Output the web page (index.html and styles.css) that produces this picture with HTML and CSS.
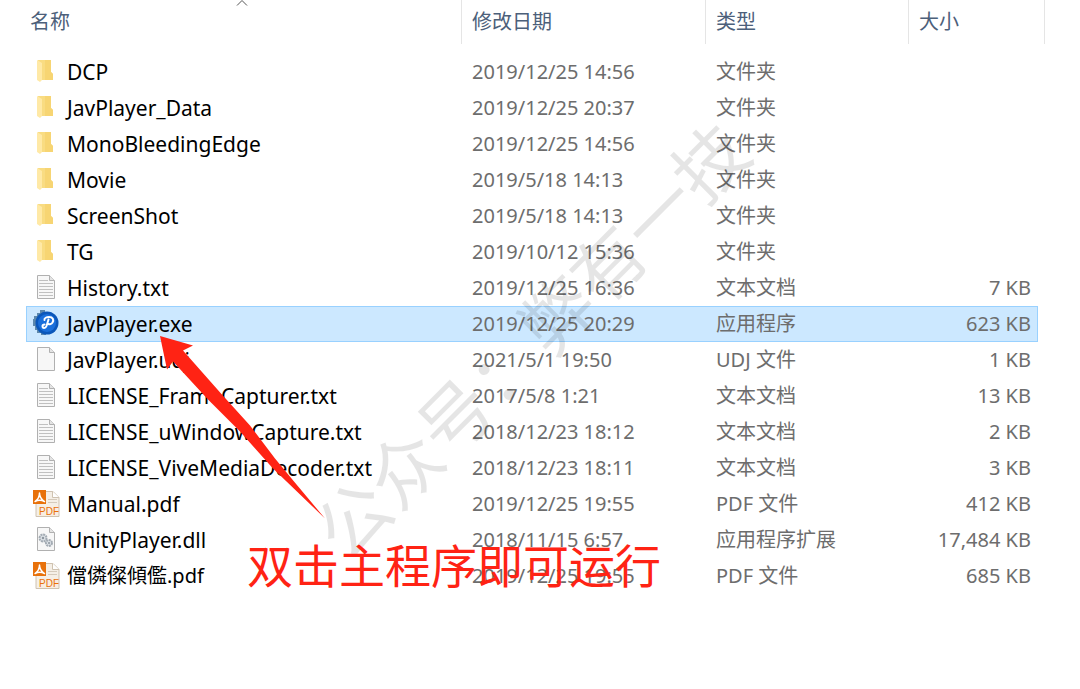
FILE: index.html
```html
<!DOCTYPE html>
<html lang="zh-CN">
<head>
    <meta charset="UTF-8">
    <meta name="viewport" content="width=device-width, initial-scale=1.0">
    <title>JavPlayer</title>
    <link rel="stylesheet" href="styles.css">
</head>
<body>
    <svg class="sprite" aria-hidden="true">
        <symbol id="folder" viewBox="0 0 28 28">
            <path d="M6 2h13v12l2 2v6H8z" fill="#f9dc82"/>
            <path d="M13 2h6v12l2 2v6h-8z" fill="#f7d573"/>
            <path d="M5 2l5 3v17l-2 2-3-2z" fill="#ffe9a6"/>
        </symbol>
        <symbol id="page" viewBox="0 0 28 28">
            <path d="M5.500 1.500h12l5 5v18h-17z" fill="#f7f7f7" stroke="#b0b0b0"/>
            <path d="M17.500 1.500v5h5" fill="#e4e4e4" stroke="#b0b0b0"/>
        </symbol>
        <symbol id="text" viewBox="0 0 28 28">
            <use href="#page"/>
            <path d="M7 6.500h9M7 9.500h14M7 12.500h14M7 15.500h14M7 18.500h14M7 21.500h14" stroke="#c0c0c0"/>
        </symbol>
        <symbol id="dll" viewBox="0 0 28 28">
            <use href="#page"/>
            <circle cx="11" cy="12" r="3.500" fill="#dce1e6" stroke="#a3abb3" stroke-width="2" stroke-dasharray="2 .7"/>
            <circle cx="11" cy="12" r="1.200" fill="#8c959e"/>
            <circle cx="17" cy="17" r="3" fill="#dce1e6" stroke="#a3abb3" stroke-width="2" stroke-dasharray="2 .7"/>
            <circle cx="17" cy="17" r="1" fill="#8c959e"/>
        </symbol>
        <symbol id="exe" viewBox="0 0 28 28">
            <path d="M13 0H8v3H5v3H2v3H1v7h2v4h2v3h4v2h5z" fill="#5d88ac"/>
            <circle cx="15" cy="13" r="11.500" fill="#0b57ba"/>
            <circle cx="15" cy="13" r="9" fill="#1a6fdb"/>
            <path d="M12.500 10c-.5-2 2-3 4.500-3 4 0 5 3 3.500 5.500-1 1.500-3 2-4 1.500M16.500 9.500l-2 6.500c-1 2.500-4 2.500-4 0 0-1 1-1.500 2-1.500" fill="none" stroke="#fff" stroke-width="2" stroke-linecap="round"/>
        </symbol>
        <symbol id="pdf" viewBox="0 0 28 28">
            <path d="M4 1.500h17l6 6v19H4z" fill="#f5efe6" stroke="#cfc2b0"/>
            <path d="M20.500 1.500v6H27" fill="#fff" stroke="#cfc2b0"/>
            <path d="M16 9.500h9M16 12.500h9" stroke="#d5cabb"/>
            <path d="M1 0h13v14H1z" fill="#e8710a"/>
            <path d="M3 11.500c3-2 4.500-5 4.500-8.500 0 3.500 2 6.500 5 8.500-3-1.500-6.500-1.500-9.500 0z" fill="none" stroke="#fff" stroke-width="1.500" stroke-linejoin="round"/>
            <path d="M7 16.500h19v9H7z" fill="#f9ede0"/>
            <text x="7" y="25" class="pdf-label">PDF</text>
        </symbol>
    </svg>

    <main class="explorer">
        <table class="files">
            <colgroup>
                <col class="col-name">
                <col class="col-date">
                <col class="col-type">
                <col class="col-size">
                <col class="col-end">
            </colgroup>
            <thead>
                <tr>
                    <th aria-sort="ascending">
                        <button type="button">名称</button>
                        <svg class="sort" viewBox="0 0 12 6" aria-hidden="true"><path d="M1 5.500l5-5 5 5" fill="none" stroke="#555"/></svg>
                    </th>
                    <th><button type="button">修改日期</button></th>
                    <th><button type="button">类型</button></th>
                    <th class="open"><button type="button">大小</button></th>
                    <th></th>
                </tr>
            </thead>
            <tbody>
                <tr><td><span class="name"><svg class="icon"><use href="#folder"/></svg>DCP</span></td><td>2019/12/25 14:56</td><td>文件夹</td><td></td></tr>
                <tr><td><span class="name"><svg class="icon"><use href="#folder"/></svg>JavPlayer_Data</span></td><td>2019/12/25 20:37</td><td>文件夹</td><td></td></tr>
                <tr><td><span class="name"><svg class="icon"><use href="#folder"/></svg>MonoBleedingEdge</span></td><td>2019/12/25 14:56</td><td>文件夹</td><td></td></tr>
                <tr><td><span class="name"><svg class="icon"><use href="#folder"/></svg>Movie</span></td><td>2019/5/18 14:13</td><td>文件夹</td><td></td></tr>
                <tr><td><span class="name"><svg class="icon"><use href="#folder"/></svg>ScreenShot</span></td><td>2019/5/18 14:13</td><td>文件夹</td><td></td></tr>
                <tr><td><span class="name"><svg class="icon"><use href="#folder"/></svg>TG</span></td><td>2019/10/12 15:36</td><td>文件夹</td><td></td></tr>
                <tr><td><span class="name"><svg class="icon"><use href="#text"/></svg>History.txt</span></td><td>2019/12/25 16:36</td><td>文本文档</td><td>7 KB</td></tr>
                <tr class="selected"><td><span class="name"><svg class="icon"><use href="#exe"/></svg>JavPlayer.exe</span></td><td>2019/12/25 20:29</td><td>应用程序</td><td>623 KB</td></tr>
                <tr><td><span class="name"><svg class="icon"><use href="#page"/></svg>JavPlayer.udj</span></td><td>2021/5/1 19:50</td><td>UDJ 文件</td><td>1 KB</td></tr>
                <tr><td><span class="name"><svg class="icon"><use href="#text"/></svg>LICENSE_FrameCapturer.txt</span></td><td>2017/5/8 1:21</td><td>文本文档</td><td>13 KB</td></tr>
                <tr><td><span class="name"><svg class="icon"><use href="#text"/></svg>LICENSE_uWindowCapture.txt</span></td><td>2018/12/23 18:12</td><td>文本文档</td><td>2 KB</td></tr>
                <tr><td><span class="name"><svg class="icon"><use href="#text"/></svg>LICENSE_ViveMediaDecoder.txt</span></td><td>2018/12/23 18:11</td><td>文本文档</td><td>3 KB</td></tr>
                <tr><td><span class="name"><svg class="icon"><use href="#pdf"/></svg>Manual.pdf</span></td><td>2019/12/25 19:55</td><td>PDF 文件</td><td>412 KB</td></tr>
                <tr><td><span class="name"><svg class="icon"><use href="#dll"/></svg>UnityPlayer.dll</span></td><td>2018/11/15 6:57</td><td>应用程序扩展</td><td>17,484 KB</td></tr>
                <tr><td><span class="name"><svg class="icon"><use href="#pdf"/></svg><span class="cjk">儅僯儏傾儖.pdf</span></span></td><td>2019/12/25 19:55</td><td>PDF 文件</td><td>685 KB</td></tr>
            </tbody>
        </table>

        <div class="watermark">公众号：弊有一技</div>
        <svg class="arrow" viewBox="0 0 168 184" aria-hidden="true">
            <path d="M1 1l33 9.500-10 5 38 43 29 32 25 33 19 23 31 37-52-50-33-37-32-32-35-38-6 8z" fill="#ff2314"/>
        </svg>
        <p class="tip">双击主程序即可运行</p>
    </main>
</body>
</html>
```
FILE: styles.css
```css
body {
    margin: 0;
    background-color: white;
    color: #6d6d6d;
    font-family: "Noto Sans", "Noto Sans CJK SC", sans-serif;
    font-size: 20px;
}

.sprite {
    display: none;
}

.explorer {
    position: relative;
    min-height: 100vh;
    padding: 0 35px 0 26px;
    box-sizing: border-box;
    overflow: hidden;
}

.files {
    width: 100%;
    table-layout: fixed;
    border-collapse: separate;
    border-spacing: 0;
}

.col-date {
    width: 244px;
}

.col-type {
    width: 203px;
}

.col-size {
    width: 129px;
}

.col-end {
    width: 7px;
}

th {
    position: relative;
    height: 44px;
    padding: 0;
    border-right: 1px solid #e5e5e5;
    box-sizing: border-box;
    text-align: left;
}

th.open {
    border-right: none;
}

th button {
    padding: 0 0 0 10px;
    border: none;
    background: none;
    color: #4c607a;
    font: inherit;
    font-weight: 400;
    line-height: 36px;
}

th:first-child button {
    padding-left: 4px;
}

.sort {
    position: absolute;
    top: 0;
    left: 50%;
    width: 12px;
    height: 6px;
    margin-left: -8px;
}

tbody::before {
    content: "";
    display: block;
    height: 10px;
}

td {
    height: 36px;
    padding: 0 0 0 10px;
    line-height: 34px;
    white-space: nowrap;
    box-sizing: border-box;
}

td:first-child {
    padding-left: 6px;
    color: black;
    font-size: 21px;
}

td:nth-child(4) {
    padding-right: 7px;
    text-align: right;
}

.name {
    display: flex;
    align-items: center;
    gap: 7px;
}

.cjk {
    font-size: 20px;
}

.icon {
    width: 28px;
    height: 28px;
    flex: none;
}

.pdf-label {
    fill: #e8710a;
    font-family: "Liberation Sans", sans-serif;
    font-size: 10px;
}

.selected td {
    background-color: #cce8ff;
    border-top: 1px solid #99d1ff;
    border-bottom: 1px solid #99d1ff;
}

.selected td:first-child {
    border-left: 1px solid #99d1ff;
    padding-left: 5px;
}

.selected td:last-child {
    border-right: 1px solid #99d1ff;
    padding-right: 6px;
}

/* notes drawn over the list */
.watermark {
    position: absolute;
    top: 49%;
    left: 49%;
    transform: translate(-50%, -50%) rotate(-45deg);
    color: rgba(0, 0, 0, 0.1);
    font-family: "Noto Sans CJK SC", sans-serif;
    font-size: 72px;
    line-height: 1;
    white-space: nowrap;
    pointer-events: none;
}

.arrow {
    position: absolute;
    top: 335px;
    left: 159px;
    width: 168px;
    height: 184px;
}

.tip {
    position: absolute;
    top: 533px;
    left: 247px;
    margin: 0;
    color: #ff2314;
    font-family: "Noto Sans CJK SC", sans-serif;
    font-size: 46px;
    line-height: 60px;
    white-space: nowrap;
}
```
